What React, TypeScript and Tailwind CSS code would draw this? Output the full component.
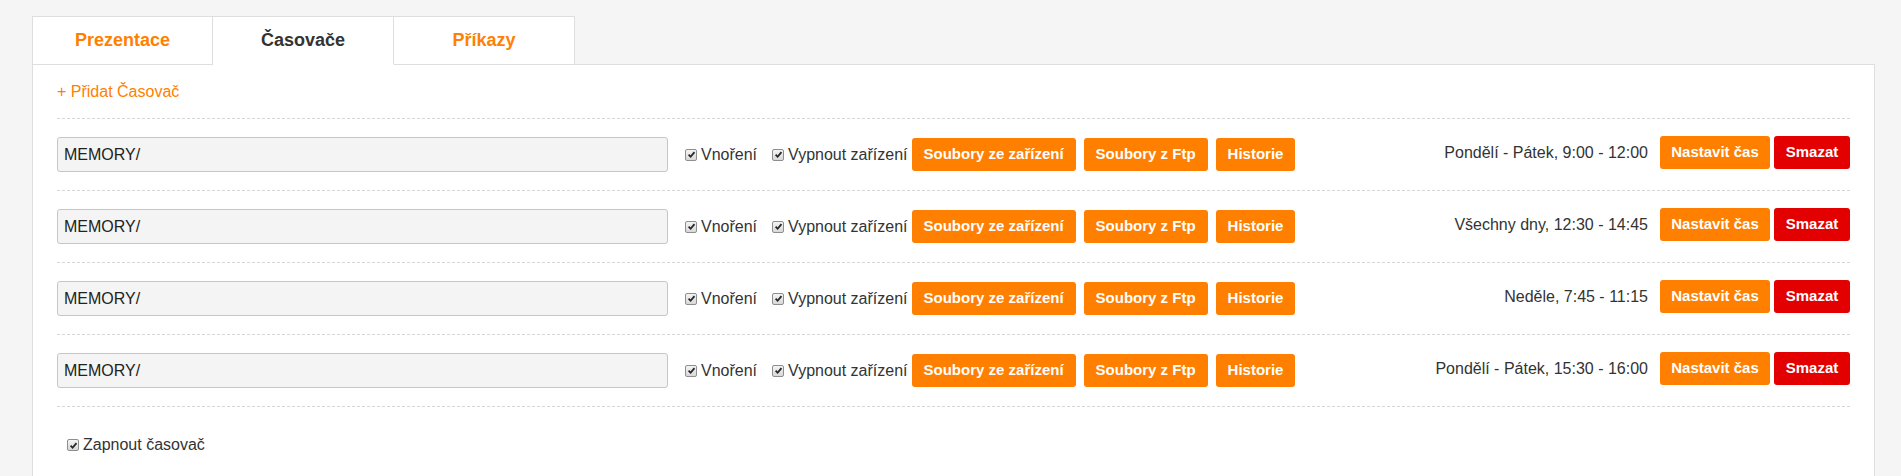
import React from "react";

const TABS = [
  { label: "Prezentace", active: false },
  { label: "Časovače", active: true },
  { label: "Příkazy", active: false },
] as const;

const TIMERS = [
  { path: "MEMORY/", time: "Pondělí - Pátek, 9:00 - 12:00" },
  { path: "MEMORY/", time: "Všechny dny, 12:30 - 14:45" },
  { path: "MEMORY/", time: "Neděle, 7:45 - 11:15" },
  { path: "MEMORY/", time: "Pondělí - Pátek, 15:30 - 16:00" },
];

function CheckBox() {
  return (
    <span className="inline-flex h-[12px] w-[12px] shrink-0 items-center justify-center rounded-[2px] border border-[#8e8e8e] bg-gradient-to-b from-[#f4f4f4] to-[#d8d8d8]">
      <svg viewBox="0 0 10 10" className="h-[9px] w-[9px]">
        <path d="M1.8 5.2 L4 7.5 L8.3 2.3" stroke="#262626" strokeWidth="2" fill="none" />
      </svg>
    </span>
  );
}

function OrangeButton({ children }: { children: React.ReactNode }) {
  return (
    <button className="h-[33px] shrink-0 rounded-[3px] bg-[#ff8000] px-3 text-[15px] font-bold text-white">
      {children}
    </button>
  );
}

export default function App() {
  return (
    <div className="min-h-screen bg-[#f5f5f5] pl-[32px] pr-[26px] pt-[16px] font-['Liberation_Sans',Arial,sans-serif] text-[#333]">
      {/* Tabs */}
      <div className="relative z-10 -mb-px flex">
        {TABS.map((tab, i) => (
          <div
            key={tab.label}
            className={`flex h-[49px] w-[181px] items-center justify-center border-t border-r border-b border-[#dedede] bg-white text-[18px] font-bold ${
              i === 0 ? "border-l" : ""
            } ${tab.active ? "border-b-white text-[#333]" : "text-[#ff8000]"}`}
          >
            {tab.label}
          </div>
        ))}
      </div>

      {/* Panel */}
      <div className="border border-[#dedede] bg-white px-[24px] pb-[40px]">
        <div className="border-b border-dashed border-[#d6d6d6] pt-[17px] pb-[16px] text-[16px] leading-5 text-[#ff8000]">
          + Přidat Časovač
        </div>

        {TIMERS.map((t, i) => (
          <div key={i} className="flex h-[72px] items-center border-b border-dashed border-[#d6d6d6] text-[16px]">
            <input
              readOnly
              value={t.path}
              className="h-[35px] w-[611px] shrink-0 rounded-[3px] border border-[#c6c6c6] bg-[#f4f4f4] px-[6px] text-[16px] text-[#222] outline-none"
            />
            <label className="ml-[17px] flex items-center gap-[4px]">
              <CheckBox />
              <span>Vnoření</span>
            </label>
            <label className="ml-[15px] flex items-center gap-[4px]">
              <CheckBox />
              <span>Vypnout zařízení</span>
            </label>
            <div className="ml-[4px] flex gap-2">
              <OrangeButton>Soubory ze zařízení</OrangeButton>
              <OrangeButton>Soubory z Ftp</OrangeButton>
              <OrangeButton>Historie</OrangeButton>
            </div>
            <div className="-mt-[4px] ml-auto flex items-center">
              <span className="mr-3">{t.time}</span>
              <button className="h-[33px] w-[110px] rounded-[3px] bg-[#ff8000] text-[15px] font-bold text-white">
                Nastavit čas
              </button>
              <button className="ml-1 h-[33px] w-[76px] rounded-[3px] bg-[#e30000] text-[15px] font-bold text-white">
                Smazat
              </button>
            </div>
          </div>
        ))}

        <label className="ml-[10px] flex items-center gap-[4px] pt-[28px] text-[16px] leading-5">
          <CheckBox />
          <span>Zapnout časovač</span>
        </label>
      </div>
    </div>
  );
}
